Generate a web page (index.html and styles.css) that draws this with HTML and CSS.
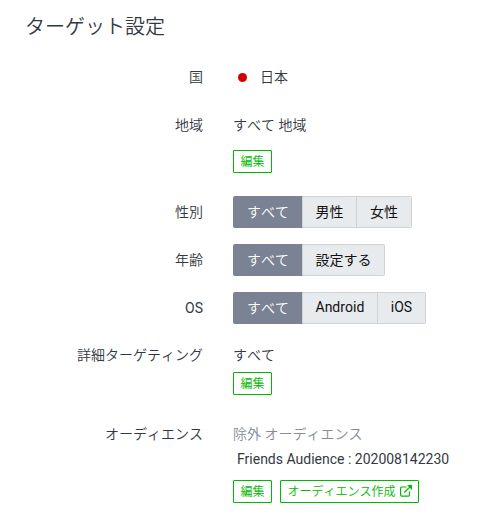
FILE: index.html
```html
<!DOCTYPE html>
<html lang="ja">
<head>
    <meta charset="UTF-8">
    <title>ターゲット設定</title>
    <link rel="stylesheet" href="styles.css">
</head>
<body>
    <div class="container">
        <h2>ターゲット設定</h2>

        <div class="row country">
            <div class="label">国</div>
            <div class="value"><span class="flag"></span>日本</div>
        </div>

        <div class="row region">
            <div class="label">地域</div>
            <div class="value">
                <div>すべて 地域</div>
                <div class="actions"><button class="btn">編集</button></div>
            </div>
        </div>

        <div class="row toggle">
            <div class="label">性別</div>
            <div class="group">
                <button class="active">すべて</button>
                <button>男性</button>
                <button>女性</button>
            </div>
        </div>

        <div class="row toggle">
            <div class="label">年齢</div>
            <div class="group">
                <button class="active">すべて</button>
                <button>設定する</button>
            </div>
        </div>

        <div class="row toggle">
            <div class="label os">OS</div>
            <div class="group">
                <button class="active">すべて</button>
                <button>Android</button>
                <button>iOS</button>
            </div>
        </div>

        <div class="row detail">
            <div class="label">詳細ターゲティング</div>
            <div class="value">
                <div>すべて</div>
                <div class="actions"><button class="btn">編集</button></div>
            </div>
        </div>

        <div class="row audience">
            <div class="label">オーディエンス</div>
            <div class="value">
                <div class="muted">除外 オーディエンス</div>
                <div class="name">Friends Audience : 202008142230</div>
                <div class="actions">
                    <button class="btn">編集</button>
                    <button class="btn">オーディエンス作成
                        <svg class="icon" width="12" height="12" viewBox="0 0 12 12">
                            <path d="M6.5 2H1.8Q.6 2 .6 3.2V10Q.6 11.2 1.8 11.2H8.3Q9.5 11.2 9.5 10V6.5M4.3 7.5L10.5 1.3" fill="none" stroke="currentColor" stroke-width="1.2"/>
                            <path d="M7 0H12V5Z" fill="currentColor"/>
                        </svg>
                    </button>
                </div>
            </div>
        </div>
    </div>
</body>
</html>
```
FILE: styles.css
```css
body {
    margin: 0;
    background-color: white;
    color: #333942;
    font-family: Roboto, "Noto Sans CJK JP", sans-serif;
    font-size: 14px;
    font-kerning: none;
    line-height: 20px;
}
.container {
    padding: 12px 0 0 25px;
}
h2 {
    margin: 0 0 25px;
    font-size: 20px;
    font-weight: 350;
    line-height: 30px;
}
.row {
    display: flex;
    gap: 30px;
    font-weight: 350;
}
.label {
    width: 178px;
    text-align: right;
}
.os, .name {
    font-weight: 400;
}
.country {
    margin-bottom: 28px;
}
.country .value {
    display: flex;
    align-items: center;
}
.flag {
    width: 9px;
    height: 9px;
    margin: 1px 13px 0 5px;
    border-radius: 50%;
    background-color: #d00000;
}
.region {
    margin-bottom: 23px;
}
.region .actions {
    margin-top: 15px;
}
.toggle {
    align-items: center;
    height: 32px;
    margin-bottom: 16px;
}
.toggle .label {
    padding-bottom: 1px;
}
.group {
    display: flex;
}
.group button {
    box-sizing: border-box;
    height: 32px;
    margin: 0;
    padding: 0 12.5px 3px;
    background-color: #e8ebee;
    border: 1px solid #ced3da;
    border-left-width: 0;
    color: #111;
    font-family: inherit;
    font-size: 14px;
    font-weight: 400;
    font-kerning: none;
    cursor: pointer;
}
.group .active {
    width: 70px;
    padding-left: 14px;
    padding-right: 13px;
    background-color: #7a8294;
    border-color: #7a8294;
    border-right-color: #ced3da;
    border-radius: 2px 0 0 2px;
    color: white;
    font-weight: 350;
}
.group button:last-child {
    border-radius: 0 2px 2px 0;
}
.group button:nth-child(3) {
    padding-left: 13px;
    padding-right: 13px;
}
.detail {
    margin: 21px 0 29px;
}
.detail .actions {
    margin-top: 7px;
}
.muted {
    color: #868d98;
}
.name {
    margin: 5px 0 0 4px;
    font-kerning: normal;
}
.audience .actions {
    margin-top: 11px;
}
.actions {
    display: flex;
    gap: 8px;
}
.btn {
    display: flex;
    align-items: center;
    box-sizing: border-box;
    height: 23px;
    padding: 0 6.5px 3px;
    background-color: white;
    border: 1px solid #00b900;
    border-radius: 1px;
    color: #00b900;
    font-family: inherit;
    font-size: 12px;
    font-weight: 350;
    font-kerning: none;
    cursor: pointer;
}
.icon {
    margin: 2px 0 0 4px;
}
```
